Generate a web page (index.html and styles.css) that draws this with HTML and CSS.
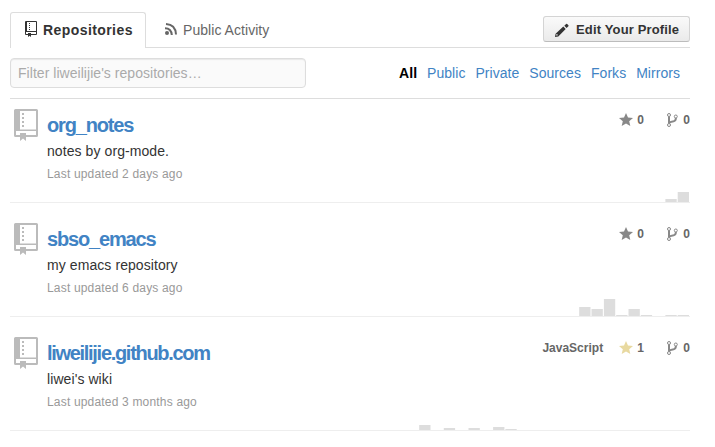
FILE: index.html
```html
<!DOCTYPE html>
<html lang="en">
<head>
<meta charset="utf-8">
<title>Repositories</title>
<link rel="stylesheet" href="styles.css">
</head>
<body>
<svg class="defs" width="0" height="0">
  <symbol id="repo" viewBox="0 0 24 32"><path fill-rule="evenodd" d="M1.5 0H22.5Q24 0 24 1.5V26.5Q24 28 22.5 28H12V32L9 29.5L6 32V28H1.5Q0 28 0 26.5V1.5Q0 0 1.5 0ZM6 2V20.5H22V2ZM2 22V26H6V24H12V26H22V22Z"/><path d="M8 4h2v2H8zM8 8h2v2H8zM8 12h2v2H8zM8 16h2v2H8z"/></symbol>
  <symbol id="star" viewBox="0 0 14 13"><path d="M7 0L9 4.6L14 5L10.2 8.2L11.3 13L7 10.4L2.7 13L3.8 8.2L0 5L5 4.6Z"/></symbol>
  <symbol id="fork" viewBox="0 0 11 14"><g fill="none" stroke="currentColor"><circle cx="2" cy="2" r="1.5"/><circle cx="2" cy="12" r="1.5"/><circle cx="8.8" cy="3.5" r="1.5"/><path stroke-width="2" d="M2 3.5V10.5M8.8 5V6C8.6 8.3 6.8 8.6 4.7 8.7C3 8.8 2.3 9.2 2 10.5"/></g></symbol>
</svg>
<main class="profile">
  <header class="tabs">
    <a class="tab selected"><svg class="tab-repo" width="12" height="16" viewBox="0 0 12 16"><path fill-rule="evenodd" d="M1 0H11Q12 0 12 1V13Q12 14 11 14H6V16L4.5 14.8L3 16V14H1Q0 14 0 13V1Q0 0 1 0ZM2 1V10H11V1ZM1 11V13H3V12H6V13H11V11Z"/><path d="M4 2h1v1H4zM4 4h1v1H4zM4 6h1v1H4zM4 8h1v1H4z"/></svg><span>Repositories</span></a>
    <a class="tab activity"><svg width="12" height="12" viewBox="0 0 12 12"><circle cx="2" cy="10" r="2"/><path fill="none" stroke="currentColor" stroke-width="2" d="M0 5.2Q6.3 5.2 6.8 12M1 1Q10.5 1.4 11 11.5"/></svg><span>Public Activity</span></a>
    <button class="edit"><svg width="14" height="14" viewBox="0 0 14 14"><path d="M0 14L.6 10.7L8.3 3.6L10.7 6L3.3 13.4ZM9.3 2.7L11.1 .9Q11.6 .5 12.1 .9L13.4 2.2Q13.8 2.7 13.4 3.2L11.6 5Z"/><path fill="#eee" d="M1.2 11.2h1.4v1.4H1.2z"/></svg><span>Edit Your Profile</span></button>
  </header>
  <div class="filter">
    <input type="text" placeholder="Filter liweilijie's repositories…">
    <nav><a class="current">All</a><a>Public</a><a>Private</a><a>Sources</a><a>Forks</a><a>Mirrors</a></nav>
  </div>
  <section class="repo first">
    <svg class="book"><use href="#repo"/></svg>
    <div class="info"><h3>org_notes</h3><p>notes by org-mode.</p><small>Last updated 2 days ago</small></div>
    <div class="stats"><svg class="star"><use href="#star"/></svg><b>0</b><svg class="fork"><use href="#fork"/></svg><b>0</b></div>
    <svg class="graph" viewBox="0 0 640 20"><path d="M615.4 17h11.3v3h-11.3zM627.7 10h11.3v10h-11.3z"/></svg>
  </section>
  <section class="repo">
    <svg class="book"><use href="#repo"/></svg>
    <div class="info"><h3>sbso_emacs</h3><p>my emacs repository</p><small>Last updated 6 days ago</small></div>
    <div class="stats"><svg class="star"><use href="#star"/></svg><b>0</b><svg class="fork"><use href="#fork"/></svg><b>0</b></div>
    <svg class="graph" viewBox="0 0 640 20"><path d="M529.2 11h11.3v9h-11.3zM541.5 13h11.3v7h-11.3zM553.9 3h11.3v17h-11.3zM566.2 19h11.3v1h-11.3zM578.5 13h11.3v7h-11.3zM590.8 19h11.3v1h-11.3zM615.4 19h11.3v1h-11.3zM627.7 19h11.3v1h-11.3z"/></svg>
  </section>
  <section class="repo">
    <svg class="book"><use href="#repo"/></svg>
    <div class="info"><h3 class="long">liweilijie.github.com</h3><p>liwei's wiki</p><small>Last updated 3 months ago</small></div>
    <div class="stats"><b class="lang">JavaScript</b><svg class="star starred"><use href="#star"/></svg><b>1</b><svg class="fork"><use href="#fork"/></svg><b>0</b></div>
    <svg class="graph" viewBox="0 0 640 20"><path d="M369.2 15h11.3v5h-11.3zM393.8 18h11.3v2h-11.3zM418.5 18h11.3v2h-11.3zM443.1 17h11.3v3h-11.3zM455.4 19h11.3v1h-11.3z"/></svg>
  </section>
</main>
</body>
</html>
```
FILE: styles.css
```css
* { box-sizing: border-box; }
body { margin: 0; background: #fff; color: #333; font: 14px/20px "Liberation Sans", Arial, sans-serif; }
svg { display: block; flex: none; fill: currentColor; }
.defs { position: absolute; }
.profile { width: 680px; margin: 12px 0 0 10px; }
.tabs { display: flex; height: 36px; border-bottom: 1px solid #ddd; }
.tab { display: flex; height: 35px; color: #666; }
.tab span { line-height: 36px; white-space: nowrap; }
.selected { width: 136px; height: 36px; padding-left: 15px; border: 1px solid #ddd; border-bottom: 0; border-radius: 3px 3px 0 0; background: #fff; color: #333; font-weight: bold; }
.selected svg { margin: 8px 6px 0 -1px; }
.selected span { line-height: 34px; letter-spacing: .42px; }
.activity { padding-left: 19px; }
.activity svg { margin: 11px 6px 0 0; }
.activity span { letter-spacing: .05px; }
.edit { display: flex; width: 147px; height: 26px; margin: 4px 0 0 auto; padding: 0 0 0 11px; border: 1px solid #d4d4d4; border-bottom-color: #bcbcbc; border-radius: 3px; background: linear-gradient(#fafafa, #eaeaea); color: #333; font: bold 13px/25px "Liberation Sans", Arial, sans-serif; white-space: nowrap; letter-spacing: .15px; }
.edit svg { margin: 6px 7px 0 0; }
.filter { display: flex; justify-content: space-between; height: 51px; padding-top: 10px; border-bottom: 1px solid #ddd; }
.filter input { width: 296px; height: 30px; padding: 0 7px; border: 1px solid #ddd; border-radius: 4px; background: #fafafa; box-shadow: inset 0 1px 1px #e8e8e8; font: 14px "Liberation Sans", Arial, sans-serif; letter-spacing: .04px; }
.filter input::placeholder { color: #aaa; opacity: 1; }
.filter nav { display: flex; gap: 10px; padding: 5px 10px 0 0; color: #4183c4; letter-spacing: .04px; }
.current { color: #000; font-weight: bold; }
.repo { display: grid; grid-template-columns: 37px 1fr auto; grid-template-rows: 93px 20px; height: 114px; border-bottom: 1px solid #eee; }
.first { grid-template-rows: 83px 20px; height: 104px; }
.book { width: 24px; height: 32px; margin: 20px 0 0 4px; color: #bbb; }
.info { padding-top: 22px; }
.first .book { margin-top: 10px; }
.first .info { padding-top: 12px; }
h3 { margin: 0; color: #4183c4; font-size: 20px; line-height: 28px; letter-spacing: -1.17px; }
.long { letter-spacing: -1.3px; }
p { margin: 2px 0 3px; line-height: 20px; letter-spacing: .08px; }
small { display: block; color: #999; font-size: 12px; line-height: 20px; letter-spacing: .18px; }
.stats { display: flex; height: 16px; margin-top: 23px; color: #666; font-size: 12px; line-height: 16px; }
.first .stats { margin-top: 13px; }
.star { width: 14px; height: 13px; margin: 1px 4px 0 0; color: #888; }
.starred { color: #e8d9a0; }
.fork { width: 11px; height: 14px; margin: 1px 5px 0 23.5px; color: #888; }
.lang { margin-right: 16px; }
.graph { grid-column: 1 / -1; width: 640px; height: 20px; margin-left: 40px; color: #ddd; }
```
